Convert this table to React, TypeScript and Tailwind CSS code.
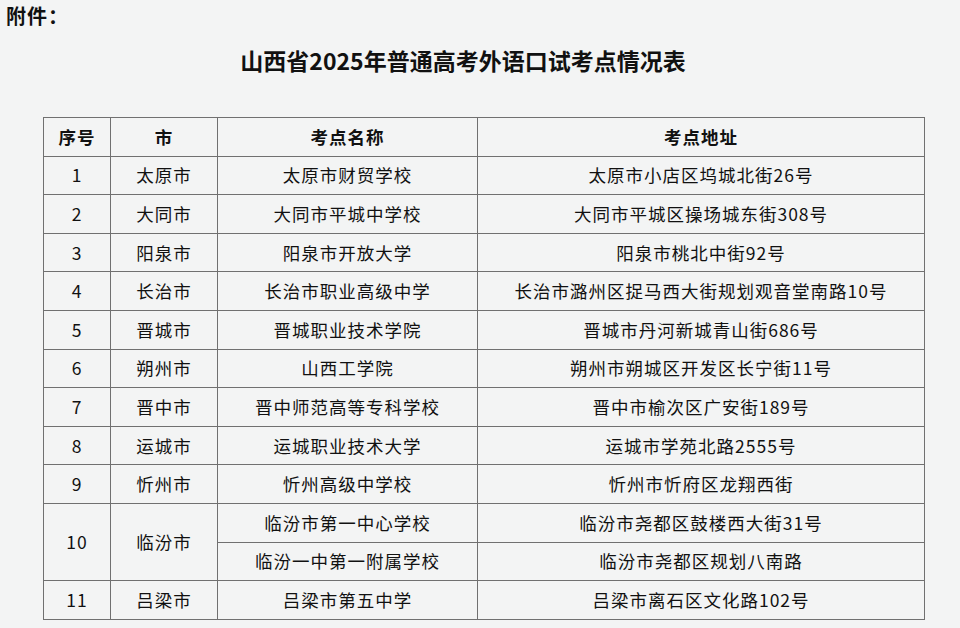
import React from "react";

const rows: [string, string, string, string][] = [
  ["1", "太原市", "太原市财贸学校", "太原市小店区坞城北街26号"],
  ["2", "大同市", "大同市平城中学校", "大同市平城区操场城东街308号"],
  ["3", "阳泉市", "阳泉市开放大学", "阳泉市桃北中街92号"],
  ["4", "长治市", "长治市职业高级中学", "长治市潞州区捉马西大街规划观音堂南路10号"],
  ["5", "晋城市", "晋城职业技术学院", "晋城市丹河新城青山街686号"],
  ["6", "朔州市", "山西工学院", "朔州市朔城区开发区长宁街11号"],
  ["7", "晋中市", "晋中师范高等专科学校", "晋中市榆次区广安街189号"],
  ["8", "运城市", "运城职业技术大学", "运城市学苑北路2555号"],
  ["9", "忻州市", "忻州高级中学校", "忻州市忻府区龙翔西街"],
];

const td = "border border-[#707070] text-center align-middle p-0";

export default function App() {
  return (
    <div
      className="w-[960px] h-[628px] overflow-hidden bg-[#f3f4f4] text-[#111]"
      style={{ fontFamily: '"Noto Sans CJK SC", "Noto Sans", sans-serif' }}
    >
      <div className="pl-[6px] pt-[2px] text-[20px] font-bold leading-[28px] tracking-[1px]">附件：</div>
      <div className="mt-[14px] text-center text-[23px] font-bold leading-[32px] pr-[34px]">
        山西省2025年普通高考外语口试考点情况表
      </div>
      <table className="ml-[43px] mt-[41px] border-collapse text-[17.5px] leading-[22px] tracking-[1px]">
        <colgroup>
          <col className="w-[67px]" />
          <col className="w-[107px]" />
          <col className="w-[260px]" />
          <col className="w-[447px]" />
        </colgroup>
        <thead>
          <tr className="h-[38.6px] font-bold">
            <th className={td}>序号</th>
            <th className={td}>市</th>
            <th className={td}>考点名称</th>
            <th className={td}>考点地址</th>
          </tr>
        </thead>
        <tbody>
          {rows.map((r) => (
            <tr key={r[0]} className="h-[38.6px]">
              <td className={td}>{r[0]}</td>
              <td className={td}>{r[1]}</td>
              <td className={td}>{r[2]}</td>
              <td className={td}>{r[3]}</td>
            </tr>
          ))}
          <tr className="h-[38.6px]">
            <td className={td} rowSpan={2}>10</td>
            <td className={td} rowSpan={2}>临汾市</td>
            <td className={td}>临汾市第一中心学校</td>
            <td className={td}>临汾市尧都区鼓楼西大街31号</td>
          </tr>
          <tr className="h-[38.6px]">
            <td className={td}>临汾一中第一附属学校</td>
            <td className={td}>临汾市尧都区规划八南路</td>
          </tr>
          <tr className="h-[38.6px]">
            <td className={td}>11</td>
            <td className={td}>吕梁市</td>
            <td className={td}>吕梁市第五中学</td>
            <td className={td}>吕梁市离石区文化路102号</td>
          </tr>
        </tbody>
      </table>
    </div>
  );
}
